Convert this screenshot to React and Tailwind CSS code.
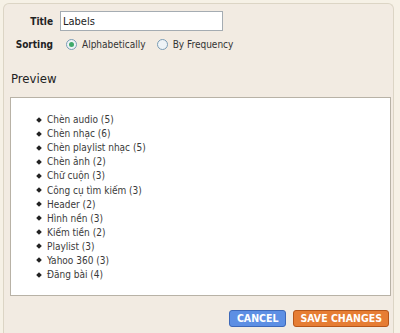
import React from 'react'

const LABELS = [
  ['Chèn audio', 5],
  ['Chèn nhạc', 6],
  ['Chèn playlist nhạc', 5],
  ['Chèn ảnh', 2],
  ['Chữ cuộn', 3],
  ['Công cụ tìm kiếm', 3],
  ['Header', 2],
  ['Hình nền', 3],
  ['Kiếm tiền', 2],
  ['Playlist', 3],
  ['Yahoo 360', 3],
  ['Đăng bài', 4],
]

function Radio({ checked }) {
  return (
    <span className="w-[11px] h-[11px] rounded-full border border-[#7a9cb5] bg-[#eef3f6] flex items-center justify-center shrink-0">
      {checked && <span className="w-[5px] h-[5px] rounded-full bg-[#3fa96a]" />}
    </span>
  )
}

export default function App() {
  return (
    <div className="w-[400px] h-[333px] bg-[#f6f1e6] overflow-hidden font-['DejaVu_Sans_Condensed','DejaVu_Sans',sans-serif] text-[#333]">
      <div className="ml-[3px] mt-[3px] w-[391px] h-[340px] bg-[#f2ebe2] border-l border-t border-r border-[#dcd5c5] rounded-tl-[6px] rounded-tr-[6px] flex flex-col">
        <div className="flex items-center h-[20px] mt-[7px]">
          <span className="w-[49px] text-right text-[10px] font-bold text-[#222]">Title</span>
          <input
            readOnly
            value="Labels"
            className="ml-[7px] w-[163px] h-[20px] border border-[#a5acb2] bg-white px-[2px] text-[11px] text-[#222] outline-none"
          />
        </div>
        <div className="flex items-center h-[20px] mt-[3px] text-[10px]">
          <span className="w-[49px] text-right font-bold text-[#222]">Sorting</span>
          <span className="ml-[13px] flex items-center gap-[5px]">
            <Radio checked />
            <span>Alphabetically</span>
          </span>
          <span className="ml-[11px] flex items-center gap-[5px]">
            <Radio />
            <span>By Frequency</span>
          </span>
        </div>
        <div className="mt-[15px] ml-[7px] text-[13px] text-[#222]">Preview</div>
        <div className="mt-[8px] ml-[6px] w-[381px] h-[199px] bg-white border border-[#b8b2a6] pt-[15px]">
          <ul className="pl-[26px]">
            {LABELS.map(([name, n]) => (
              <li key={name} className="flex items-center h-[14.1px] text-[10px] text-[#3a3a3a]">
                <span className="w-[4px] h-[4px] bg-[#222] rotate-45 mr-[6px]" />
                {name} ({n})
              </li>
            ))}
          </ul>
        </div>
        <div className="flex justify-end gap-[7px] mt-[14px] mr-[4px]">
          <button className="h-[17px] px-[7px] rounded-[3px] bg-[#5d8fe4] border border-[#3d68b8] text-white text-[10.5px] font-bold leading-none">
            CANCEL
          </button>
          <button className="h-[17px] px-[6px] rounded-[3px] bg-[#e67d34] border border-[#b6561a] text-white text-[10.5px] font-bold leading-none">
            SAVE CHANGES
          </button>
        </div>
      </div>
    </div>
  )
}
